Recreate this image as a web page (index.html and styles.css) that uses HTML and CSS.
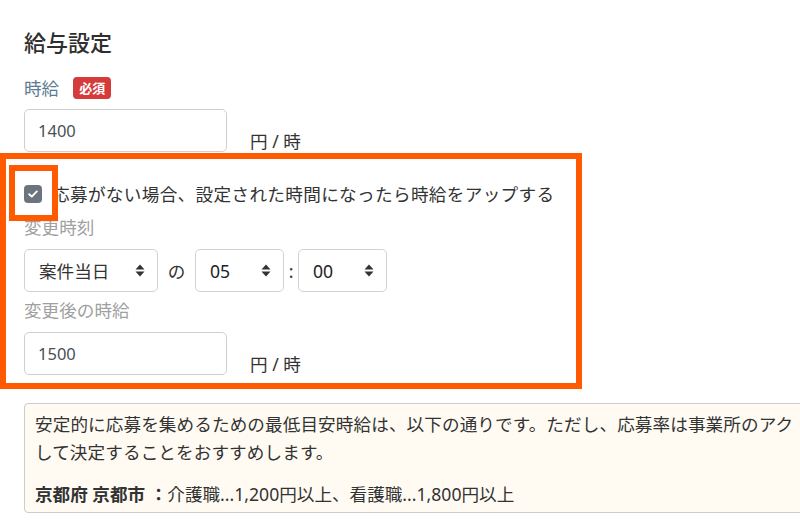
FILE: index.html
```html
<!DOCTYPE html>
<html lang="ja">
<head>
<meta charset="utf-8">
<title>給与設定</title>
<link rel="stylesheet" href="styles.css">
</head>
<body>
<div class="page">
  <h2 class="title">給与設定</h2>

  <div class="label-row">
    <span class="label">時給</span>
    <span class="badge">必須</span>
  </div>
  <div class="input-row">
    <div class="input">1400</div>
    <span class="unit">円 / 時</span>
  </div>

  <div class="check-row">
    <span class="checkbox">
      <svg width="10" height="8" viewBox="0 0 10 8"><path d="M1.2 4.2 L3.8 6.6 L8.8 1.4" fill="none" stroke="#fff" stroke-width="1.9" stroke-linecap="round" stroke-linejoin="round"/></svg>
    </span>
    <span class="check-text">応募がない場合、設定された時間になったら時給をアップする</span>
  </div>

  <div class="sub-label">変更時刻</div>
  <div class="select-row">
    <div class="select select-wide">
      <span>案件当日</span>
      <svg class="arrows" width="10" height="13" viewBox="0 0 10 13"><path d="M5 0.5 L9.5 5.5 L0.5 5.5 Z M5 12.5 L9.5 7.5 L0.5 7.5 Z" fill="#333"/></svg>
    </div>
    <span class="joiner">の</span>
    <div class="select select-narrow">
      <span class="num">05</span>
      <svg class="arrows" width="10" height="13" viewBox="0 0 10 13"><path d="M5 0.5 L9.5 5.5 L0.5 5.5 Z M5 12.5 L9.5 7.5 L0.5 7.5 Z" fill="#333"/></svg>
    </div>
    <span class="colon">:</span>
    <div class="select select-narrow">
      <span class="num">00</span>
      <svg class="arrows" width="10" height="13" viewBox="0 0 10 13"><path d="M5 0.5 L9.5 5.5 L0.5 5.5 Z M5 12.5 L9.5 7.5 L0.5 7.5 Z" fill="#333"/></svg>
    </div>
  </div>

  <div class="sub-label sub-label-2">変更後の時給</div>
  <div class="input-row input-row-2">
    <div class="input">1500</div>
    <span class="unit">円 / 時</span>
  </div>

  <div class="info">
    <p class="info-text">安定的に応募を集めるための最低目安時給は、以下の通りです。ただし、応募率は事業所のアク<br>して決定することをおすすめします。</p>
    <p class="info-area"><b>京都府 京都市 ：</b>介護職...1,200円以上、看護職...1,800円以上</p>
  </div>
</div>

<div class="mark mark-big"></div>
<div class="mark mark-small"></div>
</body>
</html>
```

FILE: styles.css
```css
html, body {
  margin: 0;
  padding: 0;
  background: #fff;
  overflow: hidden;
}

body {
  width: 800px;
  height: 532px;
  position: relative;
  font-family: "Noto Sans", "Noto Sans CJK JP", sans-serif;
  font-size: 17.6px;
  color: #333;
}

.page {
  padding: 28px 0 0 24px;
}

.title {
  margin: 0;
  font-size: 22px;
  line-height: 28px;
  font-weight: 500;
  color: #2f2f2f;
}

.label-row {
  margin-top: 21px;
  height: 22px;
  display: flex;
  align-items: center;
  gap: 14px;
}

.label {
  color: #5e7b94;
  line-height: 22px;
}

.badge {
  background: #d63b3b;
  color: #fff;
  font-size: 13px;
  font-weight: 700;
  line-height: 22px;
  height: 22px;
  padding: 0 6px;
  border-radius: 4px;
}

.input-row {
  margin-top: 10px;
  display: flex;
  align-items: flex-end;
  gap: 23px;
}

.input {
  box-sizing: border-box;
  width: 203px;
  height: 43px;
  border: 1px solid #cfcfcf;
  border-radius: 5px;
  padding: 0 13px;
  display: flex;
  align-items: center;
  color: #495057;
  font-size: 16.5px;
}

.unit {
  line-height: 22px;
  color: #333;
}

.check-row {
  margin-top: 29px;
  height: 26px;
  display: flex;
  align-items: center;
  gap: 10px;
}

.checkbox {
  width: 18px;
  height: 18px;
  border-radius: 4px;
  background: #6c757d;
  display: flex;
  align-items: center;
  justify-content: center;
}

.check-text {
  line-height: 26px;
  letter-spacing: 0.35px;
}

.sub-label {
  margin-top: 7px;
  line-height: 26px;
  color: #a0a0a0;
}

.sub-label-2 {
  margin-top: 5px;
}

.select-row {
  margin-top: 9px;
  display: flex;
  align-items: center;
}

.select {
  box-sizing: border-box;
  height: 43px;
  border: 1px solid #d2d2d2;
  border-radius: 5px;
  padding: 0 12px 0 14px;
  display: flex;
  align-items: center;
  justify-content: space-between;
}

.select-wide {
  width: 134px;
}

.select-narrow {
  width: 89px;
}

.num {
  color: #222;
}

.joiner {
  width: 37px;
  text-align: center;
}

.colon {
  width: 14px;
  text-align: center;
}

.input-row-2 {
  margin-top: 9px;
}

.info {
  margin-top: 28px;
  width: 1000px;
  box-sizing: border-box;
  border: 1px solid #cdcdcd;
  border-radius: 4px;
  background: #fffbf3;
  padding: 6px 10px 4px;
}

.info p {
  margin: 0;
  line-height: 28px;
  white-space: nowrap;
}

.info-text {
  letter-spacing: 0.1px;
}

.info-area {
  margin-top: 14px !important;
}

.info-area b {
  font-weight: 700;
}

.mark {
  position: absolute;
  box-sizing: border-box;
  border: 6px solid #ff5a00;
}

.mark-big {
  left: 0;
  top: 153px;
  width: 582px;
  height: 236px;
}

.mark-small {
  left: 9px;
  top: 165px;
  width: 49px;
  height: 56px;
}
```
